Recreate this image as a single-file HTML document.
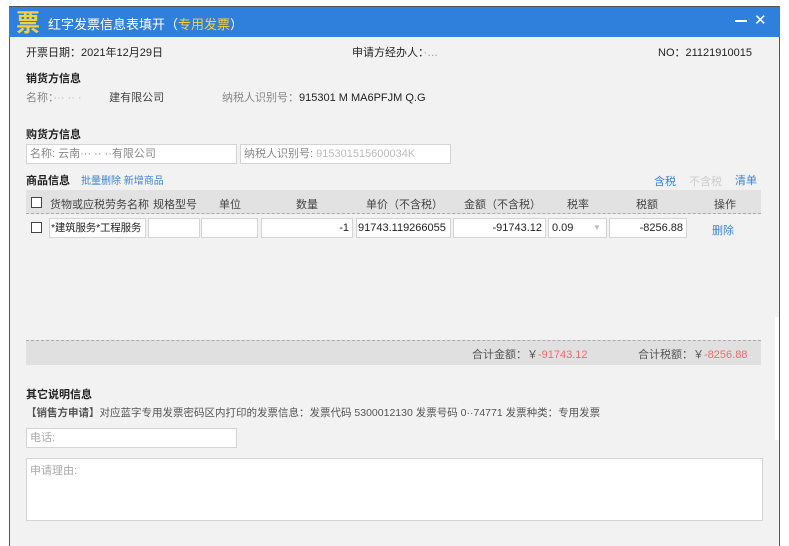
<!DOCTYPE html>
<html><head><meta charset="utf-8"><style>
*{margin:0;padding:0;box-sizing:border-box}
body{width:789px;height:540px;background:#fff;position:relative;overflow:hidden;font-family:"Liberation Sans","Noto Sans CJK SC",sans-serif;font-size:11px;color:#222}
.a{position:absolute;white-space:nowrap}
.win{position:absolute;left:9px;top:6px;width:771px;height:540px;background:#f2f2f2;border-left:1px solid #555;border-right:1px solid #555}
.tb{position:absolute;left:9px;top:6px;width:771px;height:31px;background:#2f7fdd;border-top:1px solid #555}
.b{font-weight:bold}
.g{color:#888}
.inp{position:absolute;background:#fff;border:1px solid #d4d4d4;height:20px;line-height:18px;padding:0 3px;font-size:11px;white-space:nowrap;overflow:hidden}
.lk{color:#3a86d8}
.hd{position:absolute;left:26px;top:190px;width:735px;height:24px;background:#e2e2e2;border-bottom:1px dashed #aaa}
.hd span{position:absolute;top:5px;color:#444;white-space:nowrap}
.cb{position:absolute;width:11px;height:11px;border:1px solid #444;background:#fff}
.r{text-align:right}
</style></head><body>
<div class="win"></div>
<div class="tb"></div>
<div class="a" style="left:16px;top:9px;font-size:24px;font-weight:bold;color:#f2d23a;line-height:29px">票</div>
<div class="a" style="left:48px;top:14px;font-size:13px;color:#fff">红字发票信息表填开（<span style="color:#f5d33a">专用发票</span>）</div>
<div class="a" style="left:735px;top:20px;width:12px;height:2px;background:#fff"></div>
<div class="a" style="left:754px;top:11px;font-size:15px;color:#fff">✕</div>

<div class="a" style="left:26px;top:44px">开票日期：2021年12月29日</div>
<div class="a" style="left:352px;top:44px">申请方经办人：<span style="color:#999">·…</span></div>
<div class="a" style="left:658px;top:44px">NO：21121910015</div>

<div class="a b" style="left:26px;top:70px">销货方信息</div>
<div class="a" style="left:26px;top:89px"><span class="g">名称：</span><span style="color:#bbb">··· ·· ·</span>&nbsp;&nbsp;&nbsp;&nbsp;&nbsp;&nbsp;&nbsp;&nbsp;&nbsp;<span style="color:#444">建有限公司</span></div>
<div class="a" style="left:222px;top:89px"><span class="g">纳税人识别号：</span>915301 M MA6PFJM Q.G</div>

<div class="a b" style="left:26px;top:126px">购货方信息</div>
<div class="inp g" style="left:26px;top:144px;width:211px">名称: 云南··· ·· ··有限公司</div>
<div class="inp g" style="left:240px;top:144px;width:211px">纳税人识别号: <span style="color:#bbb">915301515600034K</span></div>

<div class="a b" style="left:26px;top:172px">商品信息</div>
<div class="a lk" style="left:81px;top:172px;font-size:10px">批量删除 新增商品</div>
<div class="a lk" style="left:654px;top:173px">含税</div>
<div class="a" style="left:689px;top:173px;color:#ccc">不含税</div>
<div class="a lk" style="left:735px;top:172px">清单</div>

<div class="hd">
<div class="cb" style="left:5px;top:7px"></div>
<span style="left:24px;top:6px">货物或应税劳务名称</span>
<span style="left:127px;top:6px">规格型号</span>
<span style="left:193px;top:6px">单位</span>
<span style="left:270px;top:6px">数量</span>
<span style="left:340px;top:6px">单价（不含税）</span>
<span style="left:438px;top:6px">金额（不含税）</span>
<span style="left:541px;top:6px">税率</span>
<span style="left:610px;top:6px">税额</span>
<span style="left:688px;top:6px">操作</span>
</div>

<div class="cb" style="left:31px;top:222px"></div>
<div class="inp" style="left:49px;top:218px;width:97px;padding:0 1px;font-size:10.5px;letter-spacing:-0.2px">*建筑服务*工程服务</div>
<div class="inp" style="left:148px;top:218px;width:52px"></div>
<div class="inp" style="left:201px;top:218px;width:57px"></div>
<div class="inp r" style="left:261px;top:218px;width:92px">-1</div>
<div class="inp" style="left:356px;top:218px;width:95px;padding:0 1px">91743.119266055</div>
<div class="inp r" style="left:453px;top:218px;width:93px">-91743.12</div>
<div class="inp" style="left:548px;top:218px;width:59px">0.09<span style="position:absolute;left:44px;top:0;color:#bbb;font-size:8px">▼</span></div>
<div class="inp r" style="left:609px;top:218px;width:78px">-8256.88</div>
<div class="a lk" style="left:712px;top:222px">删除</div>

<div class="a" style="left:26px;top:340px;width:735px;height:25px;background:#e0e0e0;border-top:1px dashed #aaa"></div>
<div class="a" style="left:472px;top:346px;color:#555">合计金额：￥<span style="color:#f06a6a">-91743.12</span></div>
<div class="a" style="left:638px;top:346px;color:#555">合计税额：￥<span style="color:#f06a6a">-8256.88</span></div>
<div class="a" style="left:775px;top:317px;width:4px;height:123px;background:#fff"></div>

<div class="a b" style="left:26px;top:386px">其它说明信息</div>
<div class="a" style="left:26px;top:405px;color:#555;font-size:10.5px"><b>【销售方申请】</b>对应蓝字专用发票密码区内打印的发票信息：发票代码 5300012130 发票号码 0··74771 发票种类：专用发票</div>
<div class="inp" style="left:26px;top:428px;width:211px;color:#aaa">电话:</div>
<div class="inp" style="left:26px;top:458px;width:737px;height:63px;padding-top:3px;color:#aaa">申请理由:</div>
</body></html>
